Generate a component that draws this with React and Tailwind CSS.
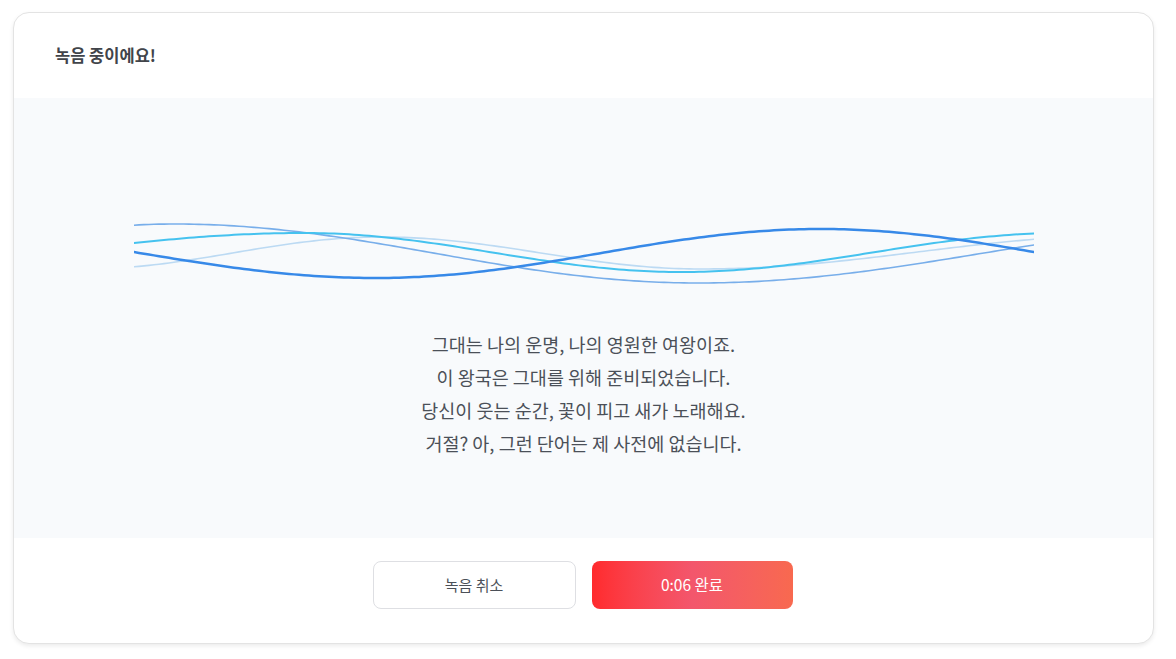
const W = 900

// smooth wave through alternating crest/trough keys (t, y)
function wavePath(keys) {
  let d = ''
  for (let t = 0; t <= W; t += 5) {
    let i = 0
    while (i < keys.length - 2 && t > keys[i + 1][0]) i++
    const [t0, y0] = keys[i]
    const [t1, y1] = keys[i + 1]
    const s = (t - t0) / (t1 - t0)
    const y = y0 + (y1 - y0) * (1 - Math.cos(Math.PI * s)) / 2
    d += (t === 0 ? 'M' : 'L') + t + ' ' + y.toFixed(2) + ' '
  }
  return d
}

const waves = [
  { keys: [[-50, 59], [247, 27], [567, 59], [1000, 25]], color: '#bcdaf3', w: 1.6 },
  { keys: [[-400, 73], [40, 14], [564, 73], [1130, 14]], color: '#78aeea', w: 1.6 },
  { keys: [[-330, 62], [170, 23], [547, 62], [930, 23], [1300, 62]], color: '#45c2ef', w: 2 },
  { keys: [[-225, 19], [242, 68], [687, 19], [1130, 68]], color: '#3789e8', w: 2.5 },
]

const lines = [
  '그대는 나의 운명, 나의 영원한 여왕이죠.',
  '이 왕국은 그대를 위해 준비되었습니다.',
  '당신이 웃는 순간, 꽃이 피고 새가 노래해요.',
  '거절? 아, 그런 단어는 제 사전에 없습니다.',
]

export default function App() {
  return (
    <div className="min-h-screen bg-white pt-3 pl-[13px]" style={{ fontFamily: '"Noto Sans CJK KR", "Noto Sans", sans-serif' }}>
      <div className="w-[1141px] h-[632px] rounded-2xl border border-[#e3e3e3] bg-white overflow-hidden shadow-[0_2px_4px_rgba(0,0,0,0.08)] flex flex-col">
        <div className="h-[85px] flex items-center px-[41px]">
          <h1 className="text-[16.5px] font-bold text-[#41444a]">녹음 중이에요!</h1>
        </div>

        <div className="h-[440px] bg-[#f8fafc] flex flex-col items-center pt-[112px]">
          <svg width="900" height="90" viewBox="0 0 900 90" fill="none">
            {waves.map((w, i) => (
              <path key={i} d={wavePath(w.keys)} stroke={w.color} strokeWidth={w.w} strokeLinecap="round" />
            ))}
          </svg>
          <div className="mt-[28px] text-center text-[18.5px] leading-[33px] text-[#4b5058]">
            {lines.map((l) => (
              <p key={l}>{l}</p>
            ))}
          </div>
        </div>

        <div className="flex-1 flex justify-center gap-4 pt-[23px] pr-[2px]">
          <button className="w-[203px] h-[48px] rounded-lg border border-[#dedfe3] bg-white text-[15px] text-[#4b5058]">
            녹음 취소
          </button>
          <button className="w-[201px] h-[48px] rounded-lg bg-linear-to-r from-[#ff2a2d] via-[#f3566c] to-[#f8694f] text-[15.5px] text-white">
            0:06 완료
          </button>
        </div>
      </div>
    </div>
  )
}
